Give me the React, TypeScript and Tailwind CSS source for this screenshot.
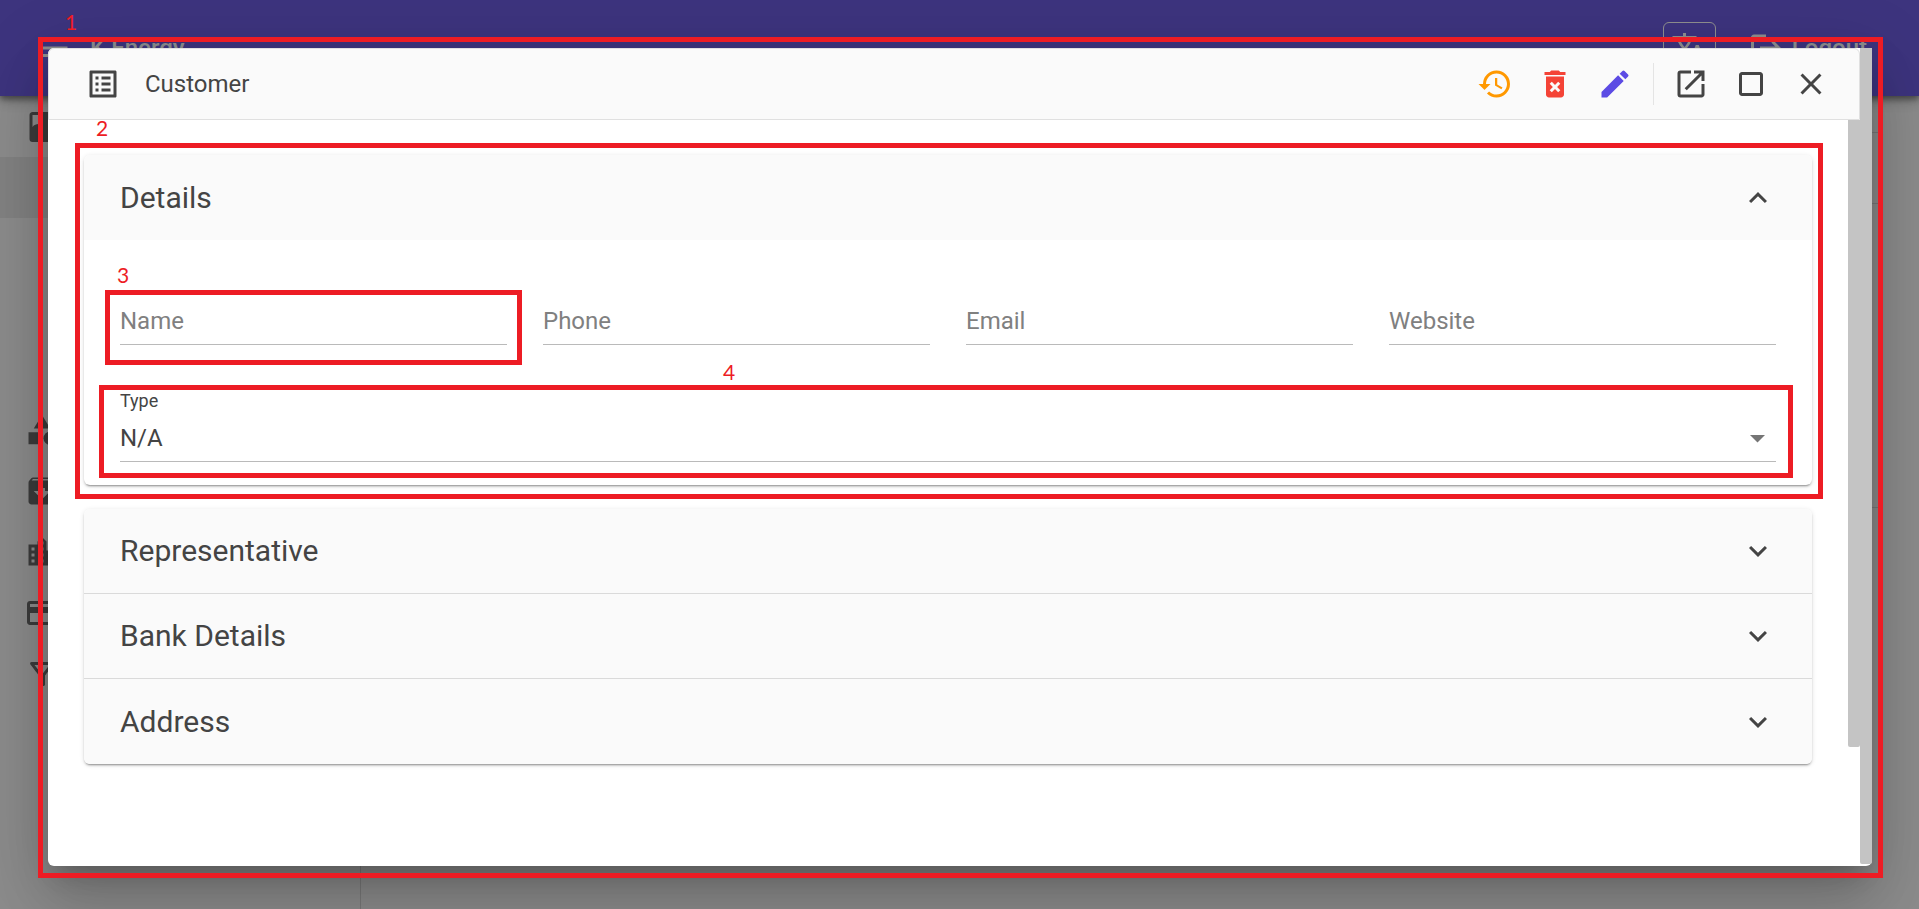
import React from "react";
import {
  MdArchive, MdCategory, MdClose, MdCreditCard, MdCropSquare, MdDeleteForever, MdEdit,
  MdExpandLess, MdExpandMore, MdHistory, MdListAlt, MdLocationCity, MdLogout, MdMenu,
  MdOpenInNew, MdOutlineFilterAlt, MdTranslate,
} from "react-icons/md";

const elevation =
  "rounded-md shadow-[0_3px_1px_-2px_rgba(0,0,0,0.2),0_2px_2px_0_rgba(0,0,0,0.14),0_1px_5px_0_rgba(0,0,0,0.12)]";

function Marker({ label, frame, tag }: { label: string; frame: string; tag: string }) {
  return (
    <div className={`pointer-events-none absolute z-10 border-5 border-[#ed1c24] ${frame}`}>
      <span className={`absolute font-[Lato,sans-serif] text-[21px] leading-6 text-[#ed1c24] ${tag}`}>
        {label}
      </span>
    </div>
  );
}

function IconButton({ label, className = "", children }: { label: string; className?: string; children: React.ReactNode }) {
  return (
    <button type="button" aria-label={label} className={`flex size-15 items-center justify-center text-4xl ${className}`}>
      {children}
    </button>
  );
}

function TextField({ label, children }: { label: string; children?: React.ReactNode }) {
  return (
    <div className="relative min-w-0 flex-1">
      <input
        type="text"
        aria-label={label}
        placeholder={label}
        className="block h-12 w-full border-b border-[#bababa] bg-transparent text-2xl outline-none placeholder:text-[#808080]"
      />
      {children}
    </div>
  );
}

function PanelHeader({ title, open = false }: { title: string; open?: boolean }) {
  return (
    <button type="button" aria-expanded={open} className="flex h-[85px] w-full items-center justify-between bg-[#fafafa] px-9 text-left text-3xl">
      {title}
      {open ? <MdExpandLess className="size-9" /> : <MdExpandMore className="size-9" />}
    </button>
  );
}

function PortraitIcon() {
  return (
    <svg aria-hidden="true" viewBox="0 0 24 24" className="size-9 fill-current">
      <path d="M5 2h14a2 2 0 0 1 2 2v16a2 2 0 0 1-2 2H5a2 2 0 0 1-2-2V4c0-1.100.9-2 2-2zm0 2v8c1-1.500 2.500-2 4-2V4z" />
    </svg>
  );
}

function Backdrop() {
  return (
    <div className="flex min-h-screen flex-col bg-[#fafafa]">
      <header className="relative flex h-24 items-center bg-[#6d5de1] pr-13 pl-9 text-2xl font-medium text-white shadow-[0_3px_6px_rgba(0,0,0,0.4),0_6px_12px_rgba(0,0,0,0.2)]">
        <MdMenu className="size-9" />
        <span className="ml-[18px] flex-1">K Energy</span>
        <button type="button" aria-label="Language" className="mr-8 flex h-13 w-[53px] items-center justify-center rounded-md border border-white">
          <MdTranslate className="size-9" />
        </button>
        <button type="button" className="flex items-center gap-2">
          <MdLogout className="size-9" />
          Logout
        </button>
      </header>
      <div className="flex flex-1">
        <nav className="w-[361px] border-r border-[#d8d8d8] text-4xl text-[#6b6b6b]">
          <div className="flex h-[61px] items-center pl-[25px]"><PortraitIcon /></div>
          <div className="h-[61px] bg-[#e8e8e8]" />
          <div className="h-[181px]" />
          <div className="flex h-[61px] items-center pl-6"><MdCategory /></div>
          <div className="flex h-[61px] items-center pl-6"><MdArchive /></div>
          <div className="flex h-[61px] items-center pl-6"><MdLocationCity /></div>
          <div className="flex h-[61px] items-center pl-6"><MdCreditCard /></div>
          <div className="flex h-[61px] items-center pl-6"><MdOutlineFilterAlt /></div>
        </nav>
        <main className="flex-1 p-9">
          <div className="h-[72px] border-y border-[#d8d8d8]" />
          <div className="h-[304px] border-b border-[#d8d8d8]" />
        </main>
      </div>
    </div>
  );
}

export default function App() {
  return (
    <div className="relative min-h-screen overflow-hidden font-[Roboto,sans-serif] text-[#444]">
      <div aria-hidden="true" inert><Backdrop /></div>
      <div className="absolute inset-0 flex bg-black/44 px-12 pt-12 pr-[47px] pb-[43px]">
        <section
          role="dialog"
          aria-label="Customer"
          className="relative flex flex-1 rounded-md bg-white shadow-[0_16px_22px_-10px_rgba(0,0,0,0.2),0_36px_57px_4px_rgba(0,0,0,0.14),0_14px_69px_12px_rgba(0,0,0,0.12)]"
        >
          <Marker label="1" frame="-top-[11px] -right-[11px] -bottom-3 -left-2.5" tag="-top-8 left-[22px]" />
          <div className="flex min-w-0 flex-1 flex-col">
            <header className="flex h-18 items-center rounded-t-md border border-[#e0e0e0] bg-[#fafafa] pr-[18px] pl-9">
              <MdListAlt className="size-9" />
              <h1 className="ml-6 flex-1 text-2xl">Customer</h1>
              <IconButton label="History" className="text-[#ff9800]"><MdHistory /></IconButton>
              <IconButton label="Delete" className="text-[#f44336]"><MdDeleteForever /></IconButton>
              <IconButton label="Edit" className="text-[#5c4be4]"><MdEdit /></IconButton>
              <div className="mr-[7px] ml-2 h-[42px] w-px bg-[#e4e4e4]" />
              <IconButton label="Open in new window"><MdOpenInNew /></IconButton>
              <IconButton label="Maximize"><MdCropSquare /></IconButton>
              <IconButton label="Close"><MdClose /></IconButton>
            </header>
            <div className="flex flex-1">
              <div className="flex flex-1 flex-col gap-6 px-9 pt-[35px]">
                <section className={`relative ${elevation}`}>
                  <Marker label="2" frame="-top-3 -right-[11px] -bottom-[14px] -left-[9px]" tag="-top-8 left-4" />
                  <div className="overflow-hidden rounded-t-md"><PanelHeader title="Details" open /></div>
                  <div className="px-9 pt-[57px] pb-[23px]">
                    <div className="flex gap-9">
                      <TextField label="Name">
                        <Marker label="3" frame="-top-[7px] -right-[15px] -bottom-5 -left-[15px]" tag="-top-8 left-[7px]" />
                      </TextField>
                      <TextField label="Phone" />
                      <TextField label="Email" />
                      <TextField label="Website" />
                    </div>
                    <div className="relative mt-11 border-b border-[#bababa] pb-[7px]">
                      <Marker label="4" frame="-top-1 -right-[17px] -bottom-[17px] -left-[21px]" tag="-top-[30px] left-[619px]" />
                      <label htmlFor="type" className="block text-lg leading-6">Type</label>
                      <div className="relative mt-[9px]">
                        <select id="type" className="block h-8 w-full appearance-none bg-transparent text-2xl leading-8 outline-none">
                          <option>N/A</option>
                        </select>
                        <svg aria-hidden="true" viewBox="0 0 15 8" className="pointer-events-none absolute top-[13px] right-[11px] h-2 w-[15px] fill-[#757575]">
                          <path d="M0 0h15L7.500 7.500z" />
                        </svg>
                      </div>
                    </div>
                  </div>
                </section>
                <section className={`divide-y divide-[#dadada] overflow-hidden ${elevation}`}>
                  <PanelHeader title="Representative" />
                  <PanelHeader title="Bank Details" />
                  <PanelHeader title="Address" />
                </section>
              </div>
              <div className="w-3"><div className="h-[84%] rounded-b-xs bg-[#c4c4c4]" /></div>
            </div>
          </div>
          <div className="w-3 pb-0.5"><div className="h-full rounded-b-xs bg-[#c4c4c4]" /></div>
        </section>
      </div>
    </div>
  );
}
